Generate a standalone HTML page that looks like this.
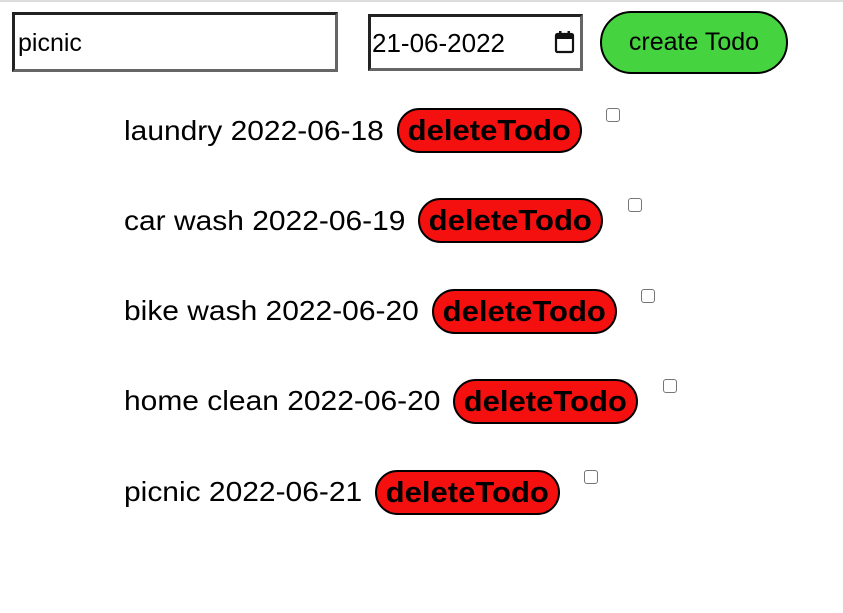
<!DOCTYPE html>
<html><head><meta charset="utf-8"><style>
html,body{margin:0;padding:0;background:#fff;width:843px;height:613px;overflow:hidden;font-family:"Liberation Sans",Arial,sans-serif;}
.topline{position:absolute;left:0;top:0;width:843px;height:2px;background:#ddd;}
.inp{position:absolute;box-sizing:border-box;border:3px solid;border-color:#222 #666 #666 #222;background:#fff;}
.t{position:absolute;font-size:25px;color:#000;white-space:nowrap;}
.btn{position:absolute;box-sizing:border-box;border:2px solid #000;border-radius:23px;background:#f51010;height:45px;width:185px;text-align:center;line-height:43px;overflow:hidden;}
.btn span{display:inline-block;font-weight:bold;font-size:29px;transform:scaleX(1.07);}
.cb{position:absolute;box-sizing:border-box;width:14px;height:14px;border:1px solid #767676;border-radius:3px;background:#fff;}
.lbl{position:absolute;font-size:28px;white-space:nowrap;line-height:30px;transform:scaleX(1.07);transform-origin:0 0;}
</style></head><body>
<div class="topline"></div>
<div class="inp" style="left:12px;top:12px;width:326px;height:60px;"></div>
<div class="t" style="left:18px;top:29px;">picnic</div>
<div class="inp" style="left:368px;top:14px;width:215px;height:57px;"></div>
<div class="t" style="left:372px;top:28px;font-size:26px;">21-06-2022</div>
<svg style="position:absolute;left:554px;top:30px" width="22" height="24" viewBox="0 0 22 24"><rect x="2" y="4" width="17" height="18" rx="1.5" fill="none" stroke="#111" stroke-width="2.2"/><rect x="2" y="4" width="17" height="5" fill="#111"/><rect x="5" y="1" width="2.5" height="5" fill="#111"/><rect x="13.5" y="1" width="2.5" height="5" fill="#111"/></svg>
<div style="position:absolute;left:600px;top:11px;width:188px;height:63px;box-sizing:border-box;border:2px solid #000;border-radius:32px;background:#46d340;font-size:25px;text-align:center;line-height:59px;">create Todo</div>

<div class="lbl" style="left:124px;top:116px;">laundry 2022-06-18</div>
<div class="btn" style="left:397px;top:108px;"><span>deleteTodo</span></div>
<div class="cb" style="left:606px;top:108px;"></div>

<div class="lbl" style="left:124px;top:206px;">car wash 2022-06-19</div>
<div class="btn" style="left:418px;top:198px;"><span>deleteTodo</span></div>
<div class="cb" style="left:628px;top:198px;"></div>

<div class="lbl" style="left:124px;top:296px;">bike wash 2022-06-20</div>
<div class="btn" style="left:432px;top:289px;"><span>deleteTodo</span></div>
<div class="cb" style="left:641px;top:289px;"></div>

<div class="lbl" style="left:124px;top:386px;">home clean 2022-06-20</div>
<div class="btn" style="left:453px;top:379px;"><span>deleteTodo</span></div>
<div class="cb" style="left:663px;top:379px;"></div>

<div class="lbl" style="left:124px;top:477px;">picnic 2022-06-21</div>
<div class="btn" style="left:375px;top:470px;"><span>deleteTodo</span></div>
<div class="cb" style="left:584px;top:470px;"></div>
</body></html>
